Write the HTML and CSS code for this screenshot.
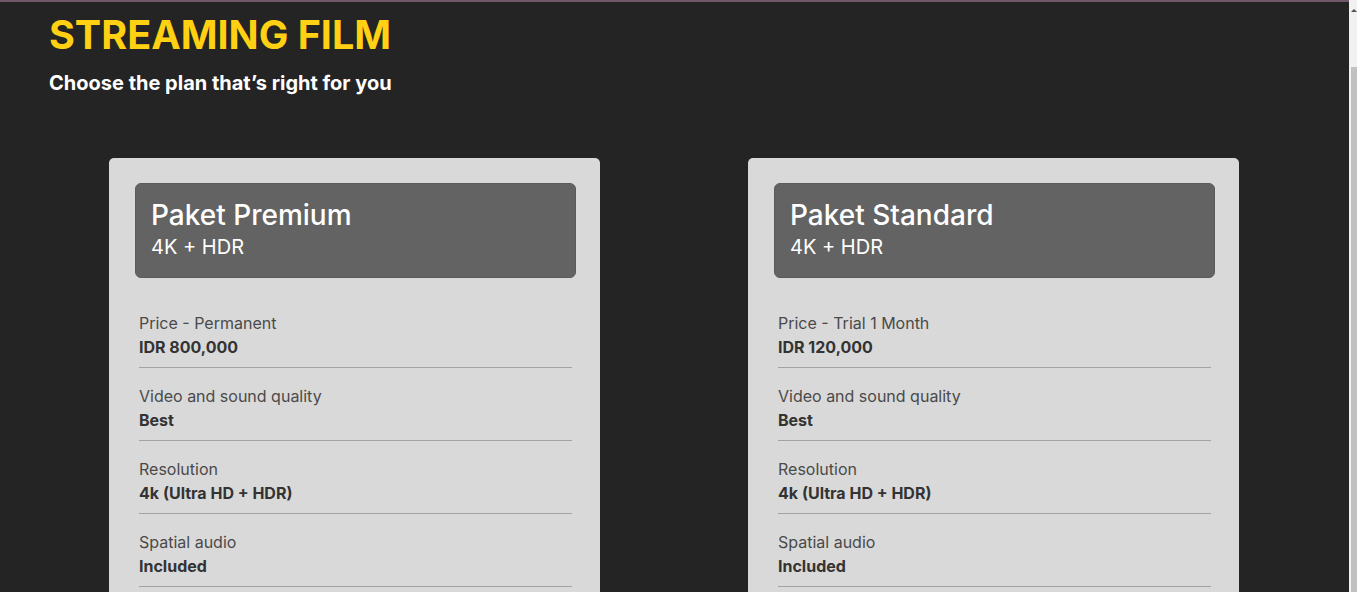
FILE: index.html
```html
<!DOCTYPE html>
<html lang="en">
<head>
<meta charset="utf-8">
<title>Streaming Film</title>
<link rel="stylesheet" href="styles.css">
</head>
<body>
<header class="page-head">
  <h1 class="brand">STREAMING FILM</h1>
  <p class="tagline">Choose the plan that’s right for you</p>
</header>
<main class="plans">
  <section class="plan">
    <div class="plan-head">
      <h2 class="plan-name">Paket Premium</h2>
      <p class="plan-tag">4K + HDR</p>
    </div>
    <dl class="plan-list">
      <div class="plan-row"><dt>Price - Permanent</dt><dd>IDR 800,000</dd></div>
      <div class="plan-row"><dt>Video and sound quality</dt><dd>Best</dd></div>
      <div class="plan-row"><dt>Resolution</dt><dd>4k (Ultra HD + HDR)</dd></div>
      <div class="plan-row"><dt>Spatial audio</dt><dd>Included</dd></div>
      <div class="plan-row"><dt>Supported devices</dt><dd>TV, computer, mobile phone, tablet</dd></div>
    </dl>
  </section>
  <section class="plan">
    <div class="plan-head">
      <h2 class="plan-name">Paket Standard</h2>
      <p class="plan-tag">4K + HDR</p>
    </div>
    <dl class="plan-list">
      <div class="plan-row"><dt>Price - Trial 1 Month</dt><dd>IDR 120,000</dd></div>
      <div class="plan-row"><dt>Video and sound quality</dt><dd>Best</dd></div>
      <div class="plan-row"><dt>Resolution</dt><dd>4k (Ultra HD + HDR)</dd></div>
      <div class="plan-row"><dt>Spatial audio</dt><dd>Included</dd></div>
      <div class="plan-row"><dt>Supported devices</dt><dd>TV, computer, mobile phone, tablet</dd></div>
    </dl>
  </section>
</main>
<div class="scrollbar" aria-hidden="true">
  <span class="scroll-arrow"></span>
  <span class="scroll-thumb"></span>
</div>
</body>
</html>
```

FILE: styles.css
```css
html {
  background: #242424;
}
body {
  margin: 0 8px 0 0;
  border-top: 2px solid #6f5668;
  font-family: Inter, "Noto Sans", sans-serif;
  color: #fff;
  min-height: 900px;
}
.page-head {
  padding: 10px 49px 0;
}
.brand {
  margin: 0;
  font-size: 39.5px;
  line-height: 46px;
  font-weight: 700;
  color: #ffd112;
}
.tagline {
  margin: 13px 0 0;
  font-size: 20px;
  line-height: 24px;
  font-weight: 700;
}
.plans {
  display: flex;
  justify-content: center;
  gap: 148px;
  margin-top: 63px;
  padding-right: 1px;
}
.plan {
  width: 491px;
  box-sizing: border-box;
  background: #d9d9d9;
  border-radius: 5px;
  padding: 25px 24px 20px 26px;
}
.plan-head {
  background: #636363;
  border: 1px solid #5a5a5a;
  border-radius: 6px;
  padding: 14px 15px 18px;
}
.plan-name {
  margin: 0;
  font-size: 28px;
  line-height: 34px;
  font-weight: 500;
}
.plan-tag {
  margin: 3px 0 0;
  font-size: 20px;
  line-height: 24px;
  font-weight: 400;
}
.plan-list {
  margin: 17px 4px 0;
}
.plan-row {
  padding: 16px 0 8px;
  border-bottom: 1px solid #a3a3a3;
}
.plan-row dt {
  font-size: 16px;
  line-height: 24px;
  color: #4a4a4a;
}
.plan-row dd {
  margin: 0;
  font-size: 16px;
  line-height: 24px;
  font-weight: 700;
  color: #333;
}
.scrollbar {
  position: fixed;
  top: 0;
  right: 0;
  width: 8px;
  height: 100%;
  background: #f1f1f1;
}
.scroll-arrow {
  position: absolute;
  top: 9px;
  left: 2px;
  width: 0;
  height: 0;
  border-left: 3px solid transparent;
  border-right: 3px solid transparent;
  border-bottom: 3px solid #505050;
}
.scroll-thumb {
  position: absolute;
  top: 67px;
  left: 2px;
  right: 0;
  bottom: 0;
  background: #c1c1c1;
}
```
